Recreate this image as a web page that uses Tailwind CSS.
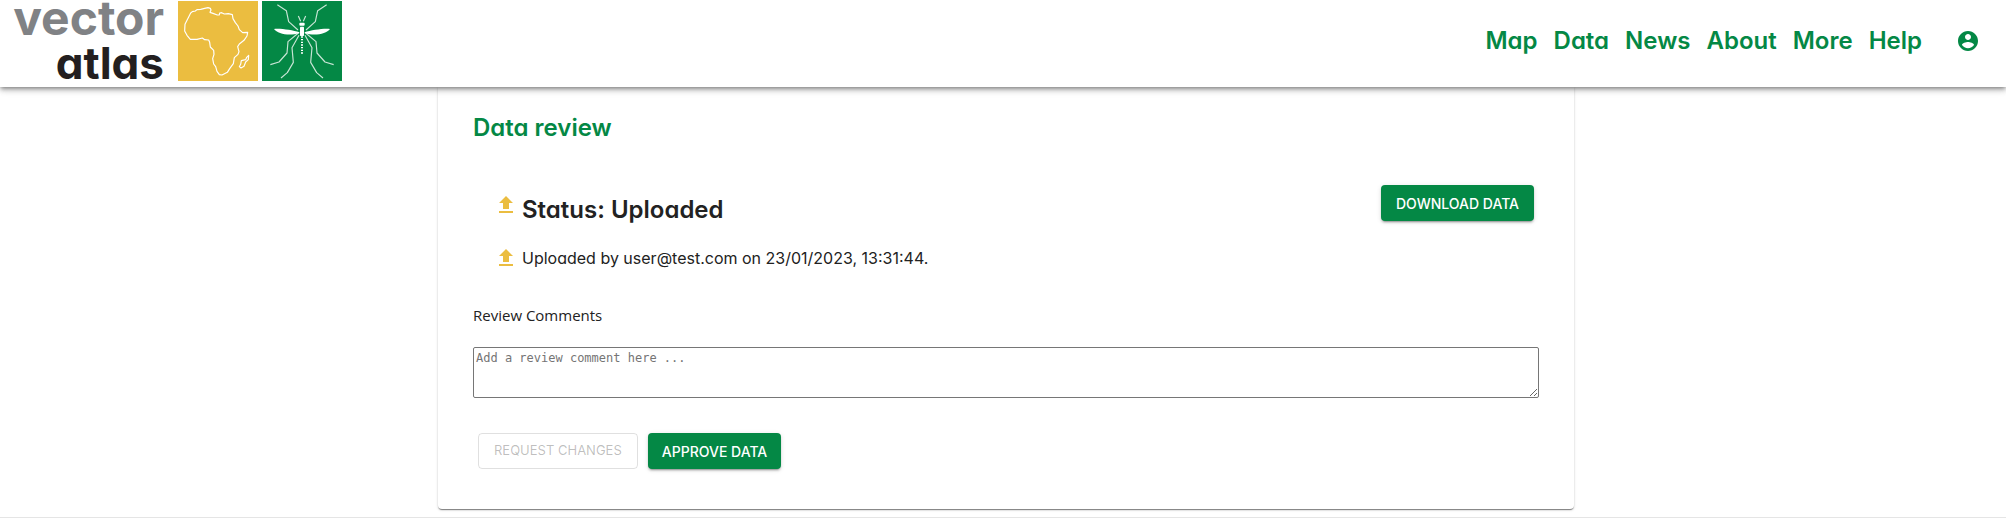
<!DOCTYPE html>
<html lang="en">
<head>
<meta charset="utf-8">
<meta name="viewport" content="width=device-width, initial-scale=1">
<title>Vector Atlas - Data review</title>
<script src="https://cdn.jsdelivr.net/npm/@tailwindcss/browser@4"></script>
</head>
<body class="bg-white font-[Inter,sans-serif] [font-feature-settings:'cv11'] text-[#222]">
<header class="relative z-10 flex h-[87px] items-start justify-between bg-white pl-3.5 pr-[26px] shadow-[0_2px_4px_-1px_rgba(0,0,0,0.4),0_4px_5px_0_rgba(0,0,0,0.14),0_1px_10px_0_rgba(0,0,0,0.12)]">
  <a href="#" class="flex items-start pt-px" aria-label="Vector Atlas home">
    <span class="flex w-[150px] flex-col items-end font-bold -mt-1.5">
      <span class="text-[48px] leading-[46px] text-[#808285]">vector</span>
      <span class="text-[44px] leading-[44px] text-[#231f20]">atlas</span>
    </span>
    <svg class="ml-3.5 size-20" viewBox="0 0 240 240" fill="none" stroke="#fff" stroke-width="3.5" stroke-linejoin="round" aria-hidden="true">
      <rect width="240" height="240" fill="#ebbd40" stroke="none"/>
      <path d="M38 36 43 32 52 30 57 26 68 25 80 22 90 20 97 22 99 27 96 34 105 37 118 42 124 42 125 36 131 35 139 39 151 38 163 41 165 53 172 65 180 75 184 86 194 95 209 94 207 105 198 118 184 129 179 137 183 152 180 160 169 170 166 188 155 203 148 214 132 222 124 221 117 211 113 197 107 189 104 173 108 160 107 148 97 138 95 124 92 117 80 116 73 111 57 115 37 115 27 103 20 90 21 70 32 48Z"/>
      <path d="M212 163 206 169 203 176 190 179 188 190 184 197 189 201 198 196 203 183 211 176Z"/>
    </svg>
    <svg class="ml-1 size-20" viewBox="0 0 240 240" fill="none" stroke="#fff" aria-hidden="true">
      <rect width="240" height="240" fill="#048845" stroke="none"/>
      <g stroke="#c8e5d5" stroke-width="3.5" stroke-linejoin="round">
        <path d="M46 11 73 29 80 62 108 87M194 11 167 29 160 62 132 87M109 96 78 122 75 156 51 183 25 191M131 96 162 122 165 156 189 183 215 191M111 103 90 140 94 184 76 215 57 231M129 103 150 140 146 184 164 215 183 231M109 45 116 61M131 45 124 61"/>
      </g>
      <path d="M120 106V160" stroke-width="6" stroke-dasharray="4 4"/>
      <g fill="#fff" stroke="none">
        <rect x="112" y="65" width="16" height="9" rx="3"/>
        <rect x="114" y="77" width="12" height="28" rx="2"/>
        <path d="M112 94C92 88 58 82 36 84 47 98 78 106 112 97ZM128 94C148 88 182 82 204 84 193 98 162 106 128 97Z"/>
      </g>
    </svg>
  </a>
  <nav class="flex h-[82px] items-center gap-4 text-[24px] font-semibold text-[#048845]" aria-label="Main">
    <a href="#">Map</a>
    <a href="#">Data</a>
    <a href="#">News</a>
    <a href="#">About</a>
    <a href="#">More</a>
    <a href="#">Help</a>
    <button type="button" class="ml-[18px]" aria-label="Account">
      <svg class="size-6" viewBox="0 0 24 24" fill="currentColor"><path d="M12 2C6.480 2 2 6.480 2 12s4.480 10 10 10 10-4.480 10-10S17.520 2 12 2zm0 3c1.660 0 3 1.340 3 3s-1.340 3-3 3-3-1.340-3-3 1.340-3 3-3zm0 14.200c-2.500 0-4.710-1.280-6-3.220.03-1.990 4-3.080 6-3.080 1.990 0 5.970 1.090 6 3.080-1.290 1.940-3.500 3.220-6 3.220z"/></svg>
    </button>
  </nav>
</header>
<main class="border-b border-[#e5e5e5] pb-2 pl-1.5">
  <section class="mx-auto max-w-[1136px] rounded-b-[4px] px-[35px] pt-[25px] pb-10 shadow-[0_2px_1px_-1px_rgba(0,0,0,0.3),0_1px_1px_0_rgba(0,0,0,0.2),0_1px_3px_0_rgba(0,0,0,0.16)]">
    <h1 class="text-[24px] leading-8 font-semibold text-[#048845]">Data review</h1>
    <div class="mt-[30px] flex items-start justify-between pt-[11px] pr-[5px] pl-[21px]">
      <div>
        <div class="flex items-start gap-1 pt-2">
          <svg class="size-6 text-[#ebbd40]" viewBox="0 0 24 24" fill="currentColor" aria-hidden="true"><path d="M5 20h14v-2H5zM5 10h4v6h6v-6h4l-7-7z"/></svg>
          <h2 class="text-[24px] leading-[34px] font-semibold">Status: Uploaded</h2>
        </div>
        <div class="mt-[19px] flex items-center gap-1">
          <svg class="size-6 text-[#ebbd40]" viewBox="0 0 24 24" fill="currentColor" aria-hidden="true"><path d="M5 20h14v-2H5zM5 10h4v6h6v-6h4l-7-7z"/></svg>
          <p class="text-[16px] leading-6">Uploaded by user@test.com on 23/01/2023, 13:31:44.</p>
        </div>
      </div>
      <button type="button" class="h-9 rounded-[4px] bg-[#048845] px-[15px] text-[14px] font-medium text-white uppercase shadow-[0_3px_1px_-2px_rgba(0,0,0,0.2),0_2px_2px_0_rgba(0,0,0,0.14),0_1px_5px_0_rgba(0,0,0,0.12)]">Download data</button>
    </div>
    <label for="comments" class="mt-[33px] block font-['Open_Sans',sans-serif] text-[15px] leading-6">Review Comments</label>
    <textarea id="comments" placeholder="Add a review comment here ..." class="mt-5 block h-[51px] w-full rounded-[2px] border border-[#767676] p-0.5 font-['DejaVu_Sans_Mono',monospace] text-[12px] leading-4 placeholder:text-[#757575]"></textarea>
    <div class="mt-[35px] flex gap-2.5 pl-[5px]">
      <button type="button" disabled class="h-9 rounded-[4px] border border-black/12 px-[15px] text-[13px] text-black/26 uppercase">Request changes</button>
      <button type="button" class="h-9 rounded-[4px] bg-[#048845] px-3.5 text-[14px] font-medium text-white uppercase shadow-[0_3px_1px_-2px_rgba(0,0,0,0.2),0_2px_2px_0_rgba(0,0,0,0.14),0_1px_5px_0_rgba(0,0,0,0.12)]">Approve data</button>
    </div>
  </section>
</main>
</body>
</html>
